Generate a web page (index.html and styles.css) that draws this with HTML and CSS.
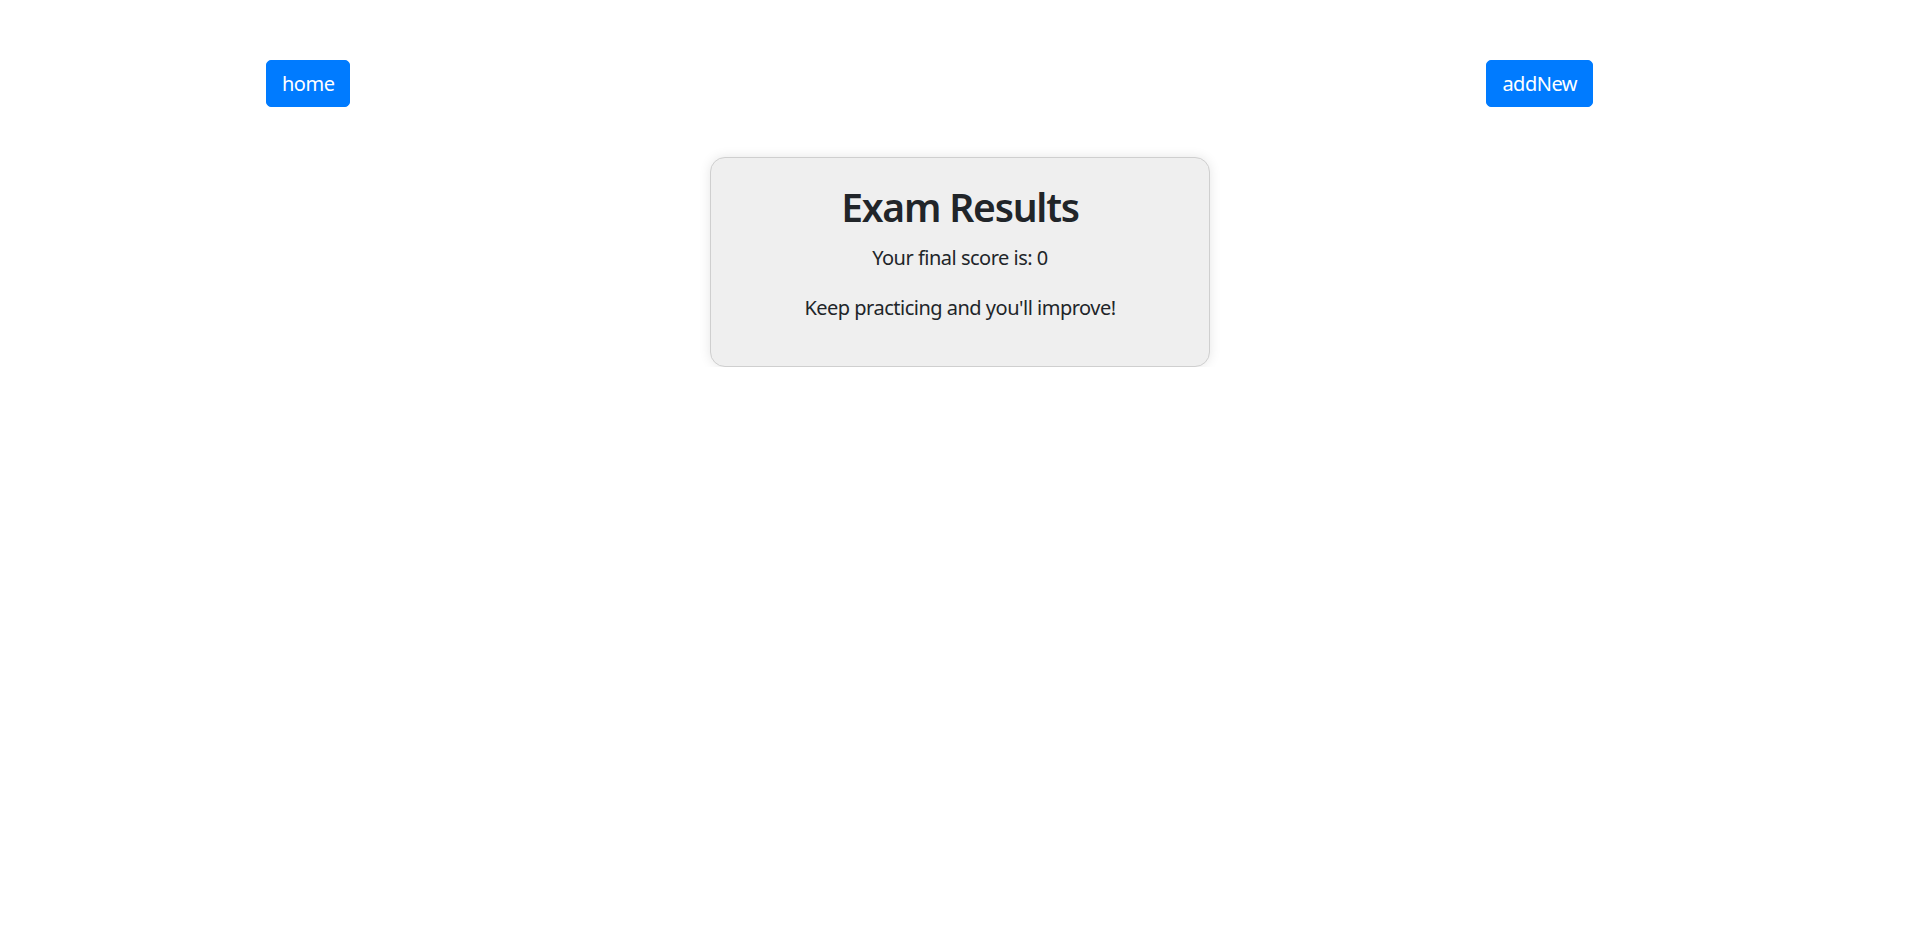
FILE: index.html
```html
<!DOCTYPE html>
<html lang="en">
<head>
<meta charset="utf-8">
<title>Exam Results</title>
<link rel="stylesheet" href="styles.css">
</head>
<body>
  <nav class="topbar">
    <button class="btn">home</button>
    <button class="btn">addNew</button>
  </nav>
  <main class="results">
    <section class="card">
      <h2 class="card-title">Exam Results</h2>
      <p class="card-text">Your final score is: 0</p>
      <p class="card-text">Keep practicing and you'll improve!</p>
    </section>
  </main>
</body>
</html>
```
FILE: styles.css
```css
* { box-sizing: border-box; }
html, body { margin: 0; padding: 0; background: #fff; }
body {
  font-family: "Noto Sans", "Open Sans", sans-serif;
  color: #212529;
  font-size: 20px;
  line-height: 1.5;
  letter-spacing: -0.5px;
}
.topbar {
  display: flex;
  justify-content: space-between;
  padding: 60px 327px 0 266px;
}
.btn {
  font-family: inherit;
  font-size: 20px;
  line-height: 30px;
  letter-spacing: -0.5px;
  padding: 7.5px 15px;
  border: 1px solid #007bff;
  background: #007bff;
  color: #fff;
  border-radius: 5px;
}
.results {
  display: flex;
  justify-content: center;
  padding-top: 50px;
}
.card {
  width: 500px;
  padding: 25px 25px 23px;
  background: #efefef;
  border: 1px solid #cfcfcf;
  border-radius: 15px;
  box-shadow: 0 0 12px rgba(0,0,0,0.1);
  text-align: center;
}
.card-title {
  margin: 0 0 12px;
  font-size: 39px;
  font-weight: 600;
  line-height: 48px;
  letter-spacing: -1.2px;
}
.card-text {
  margin: 0 0 20px;
}
```
